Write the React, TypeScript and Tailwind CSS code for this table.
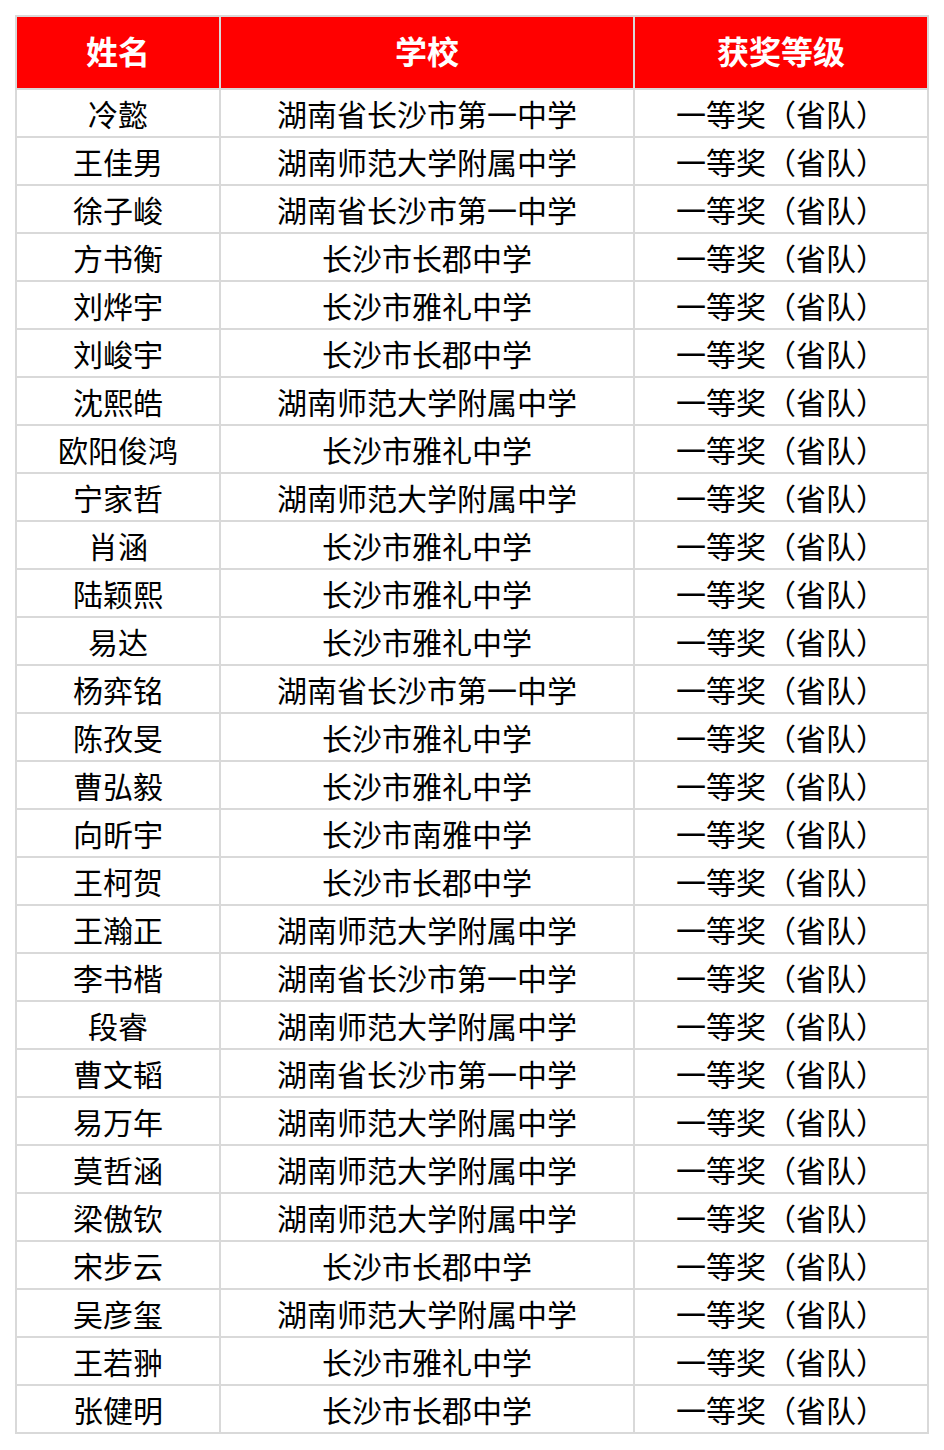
const rows: [string, string][] = [
  ['冷懿', '湖南省长沙市第一中学'],
  ['王佳男', '湖南师范大学附属中学'],
  ['徐子峻', '湖南省长沙市第一中学'],
  ['方书衡', '长沙市长郡中学'],
  ['刘烨宇', '长沙市雅礼中学'],
  ['刘峻宇', '长沙市长郡中学'],
  ['沈熙皓', '湖南师范大学附属中学'],
  ['欧阳俊鸿', '长沙市雅礼中学'],
  ['宁家哲', '湖南师范大学附属中学'],
  ['肖涵', '长沙市雅礼中学'],
  ['陆颖熙', '长沙市雅礼中学'],
  ['易达', '长沙市雅礼中学'],
  ['杨弈铭', '湖南省长沙市第一中学'],
  ['陈孜旻', '长沙市雅礼中学'],
  ['曹弘毅', '长沙市雅礼中学'],
  ['向昕宇', '长沙市南雅中学'],
  ['王柯贺', '长沙市长郡中学'],
  ['王瀚正', '湖南师范大学附属中学'],
  ['李书楷', '湖南省长沙市第一中学'],
  ['段睿', '湖南师范大学附属中学'],
  ['曹文韬', '湖南省长沙市第一中学'],
  ['易万年', '湖南师范大学附属中学'],
  ['莫哲涵', '湖南师范大学附属中学'],
  ['梁傲钦', '湖南师范大学附属中学'],
  ['宋步云', '长沙市长郡中学'],
  ['吴彦玺', '湖南师范大学附属中学'],
  ['王若翀', '长沙市雅礼中学'],
  ['张健明', '长沙市长郡中学'],
];

const headers = ['姓名', '学校', '获奖等级'];

export default function App() {
  return (
    <div
      className="min-h-screen bg-white pt-[15px] pl-[15px]"
      style={{ fontFamily: '"Noto Sans CJK SC", "Noto Sans", sans-serif' }}
    >
      <div className="grid w-[914px] grid-cols-[202px_412px_292px] gap-[2px] border-2 border-[#d9d9d9] bg-[#d9d9d9]">
        {headers.map((h) => (
          <div
            key={h}
            className="flex h-[71px] items-center justify-center bg-[#ff0000] pb-[6px] text-[32px] font-bold leading-none text-white"
          >
            {h}
          </div>
        ))}
        {rows.map(([name, school], i) => (
          <div key={i} className="contents">
            <div className="flex h-[46px] items-center justify-center bg-white text-[30px] leading-none text-black">
              {name}
            </div>
            <div className="flex h-[46px] items-center justify-center bg-white text-[30px] leading-none text-black">
              {school}
            </div>
            <div className="flex h-[46px] items-center justify-center bg-white text-[30px] leading-none text-black">
              一等奖（省队）
            </div>
          </div>
        ))}
      </div>
    </div>
  );
}
